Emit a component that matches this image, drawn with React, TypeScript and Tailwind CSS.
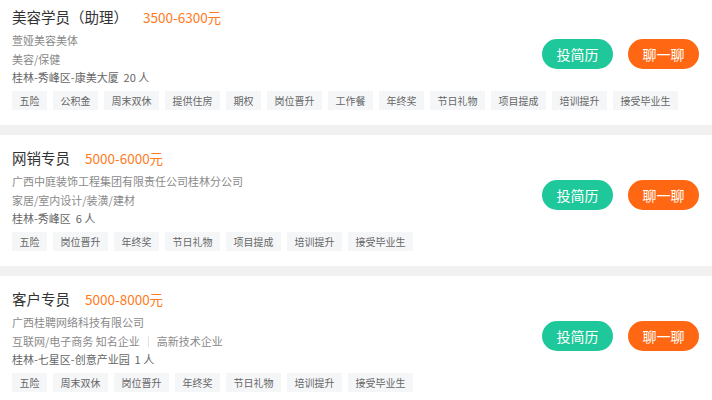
import React from "react";

type Job = {
  title: string;
  salary: string;
  company: string;
  industry: string[];
  location: string;
  tags: string[];
};

const jobs: Job[] = [
  {
    title: "美容学员（助理）",
    salary: "3500-6300元",
    company: "萱娅美容美体",
    industry: ["美容/保健"],
    location: "桂林-秀峰区-康美大厦  20 人",
    tags: [
      "五险",
      "公积金",
      "周末双休",
      "提供住房",
      "期权",
      "岗位晋升",
      "工作餐",
      "年终奖",
      "节日礼物",
      "项目提成",
      "培训提升",
      "接受毕业生",
    ],
  },
  {
    title: "网销专员",
    salary: "5000-6000元",
    company: "广西中庭装饰工程集团有限责任公司桂林分公司",
    industry: ["家居/室内设计/装潢/建材"],
    location: "桂林-秀峰区  6 人",
    tags: ["五险", "岗位晋升", "年终奖", "节日礼物", "项目提成", "培训提升", "接受毕业生"],
  },
  {
    title: "客户专员",
    salary: "5000-8000元",
    company: "广西桂聘网络科技有限公司",
    industry: ["互联网/电子商务 知名企业", "高新技术企业"],
    location: "桂林-七星区-创意产业园  1 人",
    tags: ["五险", "周末双休", "岗位晋升", "年终奖", "节日礼物", "培训提升", "接受毕业生"],
  },
];

function JobCard({ job }: { job: Job }) {
  return (
    <div className="flex flex-col bg-white pl-3 pr-[13px] pt-[13px] pb-[15px]">
      <div className="flex items-start justify-between">
        <div className="flex flex-col">
          {/* Title + salary */}
          <div className="flex h-[20px] items-center">
            <span className="text-[14.5px] text-[#333]">{job.title}</span>
            <span className="ml-[15px] text-[13.5px] text-[#ff7a1c]">{job.salary}</span>
          </div>
          <div className="mt-[4px] text-[11px] leading-[18px] text-[#8a8a8a]">
            {job.company}
          </div>
          <div className="mt-[1px] flex items-center text-[11px] leading-[18px] text-[#8a8a8a]">
            {job.industry.map((item, i) => (
              <React.Fragment key={i}>
                {i > 0 && <span className="mx-[8px] h-[11px] w-px bg-[#e2e2e2]" />}
                <span>{item}</span>
              </React.Fragment>
            ))}
          </div>
          <div className="whitespace-pre text-[11px] leading-[18px] text-[#666]">
            {job.location}
          </div>
        </div>

        <div className="mt-[32px] flex gap-[15px]">
          <button className="h-[30px] w-[71px] rounded-full bg-[#1fc89b] text-[14px] text-white">
            投简历
          </button>
          <button className="h-[30px] w-[71px] rounded-full bg-[#ff6712] text-[14px] text-white">
            聊一聊
          </button>
        </div>
      </div>

      {/* Tags */}
      <div className="mt-[5px] flex gap-[6px]">
        {job.tags.map((tag) => (
          <span
            key={tag}
            className="flex h-[19px] items-center whitespace-nowrap bg-[#f5f6f8] px-[7.5px] text-[10px] text-[#666]"
          >
            {tag}
          </span>
        ))}
      </div>
    </div>
  );
}

export default function App() {
  return (
    <div
      className="h-[400px] w-[712px] overflow-hidden bg-[#f1f1f1]"
      style={{ fontFamily: '"Noto Sans CJK SC", "Noto Sans", sans-serif' }}
    >
      <div className="-mt-[6px] flex flex-col gap-[10px]">
        {jobs.map((job) => (
          <JobCard key={job.title} job={job} />
        ))}
      </div>
    </div>
  );
}
